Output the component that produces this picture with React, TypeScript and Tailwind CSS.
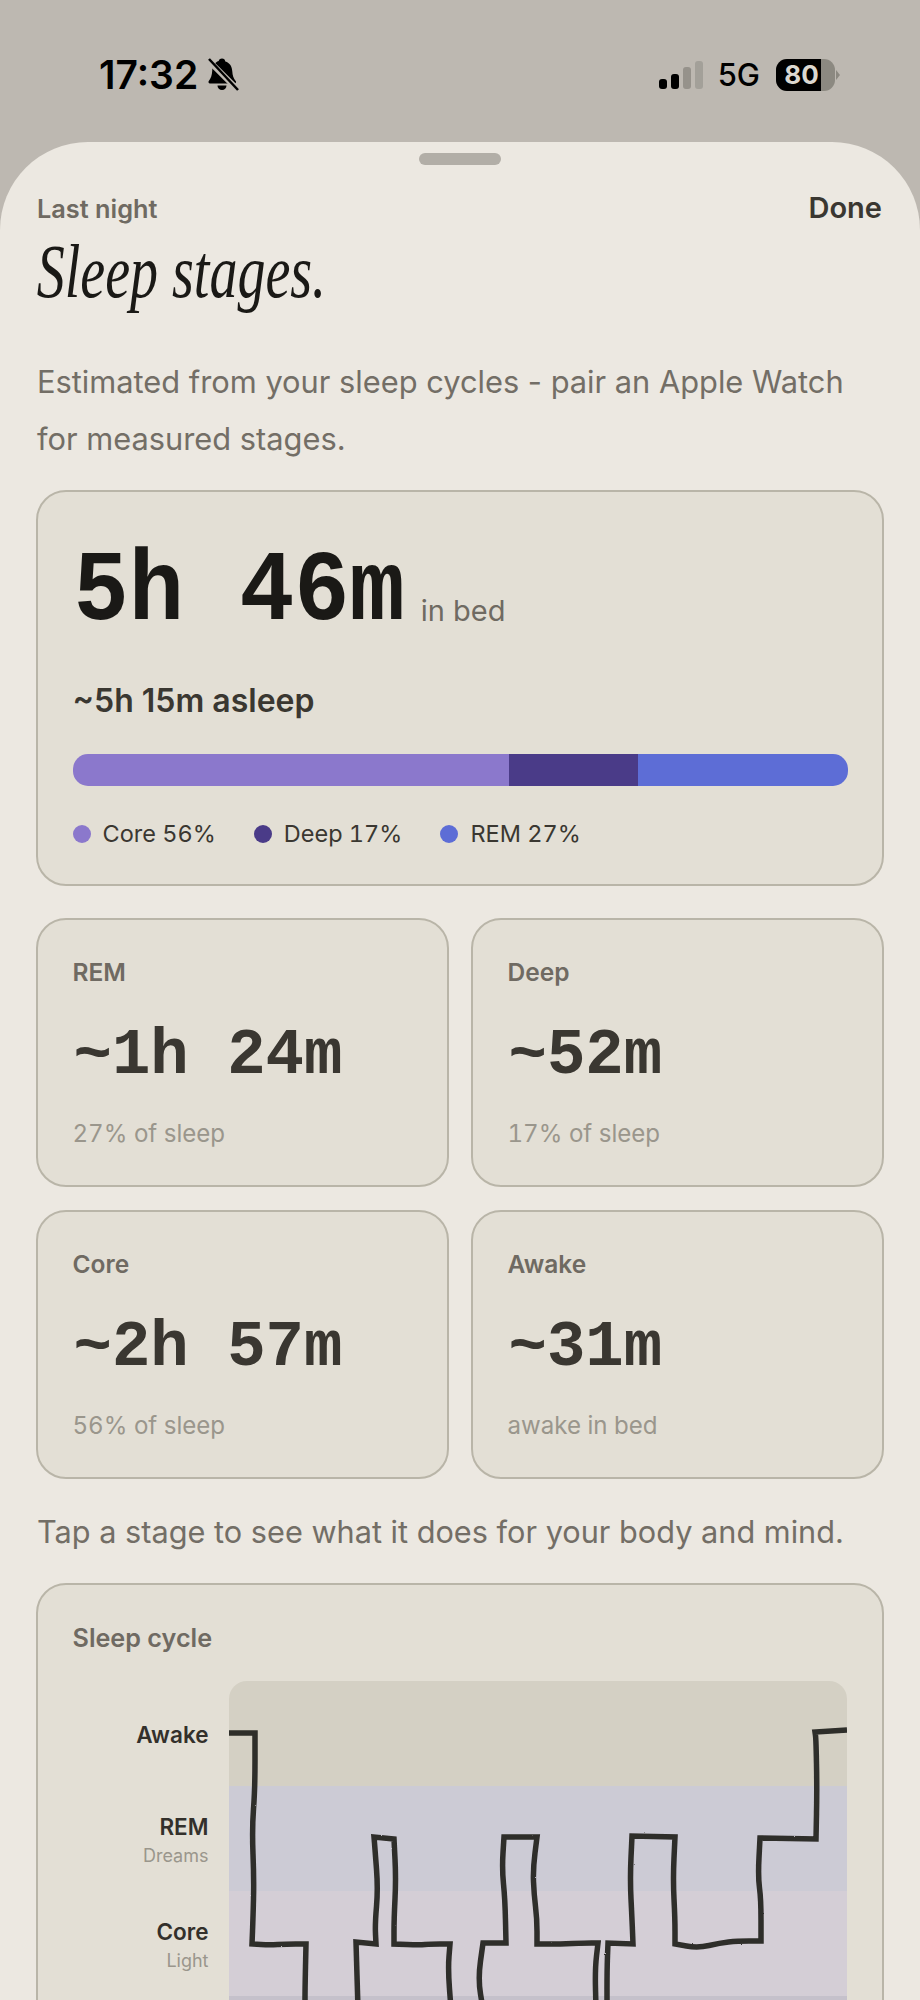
const sans = "font-['Inter',sans-serif]";
const mono = "font-['Liberation_Mono',monospace]";

function BellSlash() {
  return (
    <svg width="32" height="36" viewBox="0 0 32 36" className="ml-[9px]">
      <path d="M15 1.500c2 0 3 1.200 3.300 3 4.600 1.300 6.700 5 7 10 .2 4 1.200 7 3.400 9.600.8 1 .2 2.400-1.200 2.400H3c-1.400 0-2-1.400-1.200-2.400C4 21.100 5 18 5.200 14c.2-5 2.500-8.700 6.500-10 .3-1.400 1.300-2.500 3.300-2.500Z" fill="#000" />
      <path d="M10.500 28.500h9a4.500 4.500 0 0 1-9 0Z" fill="#000" />
      <path d="M1 3 31 33" stroke="#bdb8b1" strokeWidth="6" />
      <path d="M2 2 31 33" stroke="#000" strokeWidth="2.500" />
    </svg>
  );
}

function StatusBar() {
  return (
    <div className={`flex h-[142px] items-start justify-between pl-[99px] pr-[80px] pt-[53px] text-black ${sans}`}>
      <div className="flex h-[44px] items-center">
        <span className="text-[39px] font-semibold leading-[44px]">17:32</span>
        <BellSlash />
      </div>
      <div className="flex h-[44px] items-center">
        <div className="flex h-[28px] items-end gap-[4px]">
          <div className="h-[10px] w-[8px] rounded-[3px] bg-black" />
          <div className="h-[15px] w-[8px] rounded-[3px] bg-black" />
          <div className="h-[22px] w-[8px] rounded-[3px] bg-[#96928b]" />
          <div className="h-[28px] w-[8px] rounded-[3px] bg-[#a3a099]" />
        </div>
        <span className="ml-[15px] text-[31px] font-medium leading-[44px]">5G</span>
        <div className="relative ml-[16px] flex h-[32px] w-[59px] overflow-hidden rounded-[11px] bg-[#8c8981]">
          <div className="flex w-[45px] items-center justify-center bg-black text-[26px] font-bold leading-none text-[#dcd8d0]">
            <span className="pl-[6px]">80</span>
          </div>
        </div>
        <svg width="4" height="10" viewBox="0 0 4 10" className="ml-[1px]"><path d="M0 0 4 5 0 10Z" fill="#8c8981" /></svg>
      </div>
    </div>
  );
}

function Stat({ label, value, sub }: { label: string; value: string; sub: string }) {
  return (
    <div className="h-[269px] rounded-[30px] border-[2.500px] border-[#b9b5a8] bg-[#e3dfd5] px-[34.500px] pt-[37px]">
      <div className="text-[24.500px] font-semibold leading-[30px] text-[#6f6a62]">{label}</div>
      <div className={`mt-[33px] pl-[1px] text-[64px] font-bold leading-[72px] whitespace-pre text-[#3a3731] ${mono}`}>{value}</div>
      <div className="mt-[27px] text-[24.100px] leading-[30px] tabular-nums text-[#9a968c]">{sub}</div>
    </div>
  );
}

function Legend({ color, text }: { color: string; text: string }) {
  return (
    <div className="flex items-center gap-[12px]">
      <span className="size-[18px] rounded-full" style={{ backgroundColor: color }} />
      <span className="text-[23.500px] leading-[30px] tabular-nums text-[#3a3731]">{text}</span>
    </div>
  );
}

function BandLabel({ name, sub, h }: { name: string; sub?: string; h: string }) {
  return (
    <div className={`flex flex-col items-end ${h}`}>
      <span className="text-[22.500px] font-semibold leading-[30px] text-[#33302b]">{name}</span>
      {sub && <span className="text-[18px] leading-[28px] text-[#9a968c]">{sub}</span>}
    </div>
  );
}

const OX = 229;
const OY = 1682;
function pts(list: number[][]) {
  const p = list.map((q) => [q[0] - OX, q[1] - OY]);
  let d = `M${p[0][0]} ${p[0][1]}`;
  for (let i = 1; i < p.length - 1; i++) {
    const a = p[i - 1];
    const b = p[i];
    const c = p[i + 1];
    const v1 = Math.atan2(b[1] - a[1], b[0] - a[0]);
    const v2 = Math.atan2(c[1] - b[1], c[0] - b[0]);
    let diff = Math.abs(v1 - v2);
    if (diff > Math.PI) diff = 2 * Math.PI - diff;
    if (diff > Math.PI / 4) {
      d += ` L${b[0]} ${b[1]}`;
    } else {
      d += ` L${(a[0] + b[0]) / 2} ${(a[1] + b[1]) / 2} Q${b[0]} ${b[1]} ${(b[0] + c[0]) / 2} ${(b[1] + c[1]) / 2}`;
    }
  }
  const e = p[p.length - 1];
  return `${d} L${e[0]} ${e[1]}`;
}
const lines = [
  [[229,1734],[255,1734],[255,1790],[252,1830],[254,1880],[253,1920],[252,1945],[270,1946],[285,1945],[306,1945],[305,1990],[305,2010]],
  [[358,2010],[356,1943],[376,1945],[375,1925],[378,1890],[375,1850],[374,1838],[394,1840],[396,1880],[394,1920],[394,1945],[420,1946],[430,1945],[450,1945],[448,1970],[451,2010]],
  [[483,2010],[478,1980],[483,1944],[506,1944],[505,1900],[502,1870],[504,1838],[537,1838],[533,1870],[534,1895],[537,1920],[537,1945],[560,1945],[585,1944],[598,1944],[595,1970],[596,2010]],
  [[607,2010],[607,1970],[608,1944],[633,1945],[632,1920],[630,1880],[632,1837],[675,1838],[673,1880],[675,1920],[675,1945],[698,1949],[720,1944],[737,1942],[761,1942],[761,1900],[758,1878],[760,1839],[816,1840],[817,1790],[816,1740],[815,1733],[847,1731]],
];

function Chart() {
  return (
    <div className="relative flex h-[420px] w-[618px] flex-col overflow-hidden rounded-t-[18px]">
      <div className="h-[105px] bg-[#d4d0c4]" />
      <div className="h-[105px] bg-[#cccbd5]" />
      <div className="h-[105px] bg-[#d4ced6]" />
      <div className="h-[105px] bg-[#c5c1cb]" />
      <svg className="absolute inset-0" width="618" height="420" viewBox="0 0 618 420" fill="none">
        <filter id="rough" x="-5%" y="-5%" width="110%" height="110%">
          <feTurbulence type="fractalNoise" baseFrequency="0.9" numOctaves="2" seed="3" />
          <feDisplacementMap in="SourceGraphic" scale="1.5" />
        </filter>
        <g filter="url(#rough)">
          {lines.map((l, i) => (
            <path key={i} d={pts(l)} stroke="#2e2d2a" strokeWidth="5.500" strokeLinejoin="miter" />
          ))}
        </g>
      </svg>
    </div>
  );
}

export default function App() {
  return (
    <div className={`h-[2000px] w-[920px] overflow-hidden bg-[#bdb8b1] ${sans}`}>
      <StatusBar />
      <div className="h-[1858px] rounded-t-[88px] bg-[#ece8e1] px-[36px] pt-[11px]">
        <div className="mx-auto h-[12px] w-[82px] rounded-full bg-[#b2aea7]" />
        <div className="mt-[27px] flex items-center justify-between pl-[1px] pr-[2px]">
          <span className="pt-[1px] text-[25.300px] font-semibold leading-[32px] text-[#6f6a62]">Last night</span>
          <span className="pb-[1px] text-[29px] font-semibold leading-[32px] text-[#3a3731]">Done</span>
        </div>
        <h1 className="mt-[8px] origin-left scale-x-[0.737] pl-[1px] font-['Liberation_Serif',serif] text-[76px] font-normal italic leading-[76px] text-[#1a1916]">Sleep stages.</h1>
        <p className="mt-[43.500px] pl-[1px] text-[30.800px] leading-[57px] text-[#736e66]">Estimated from your sleep cycles - pair an Apple Watch<br />for measured stages.</p>
        <div className="mt-[23px] h-[396px] rounded-[30px] border-[2.500px] border-[#b9b5a8] bg-[#e3dfd5] px-[34.500px] pt-[55px]">
          <div className="flex items-baseline">
            <span className={`inline-block origin-bottom scale-y-[1.08] pl-[1px] text-[92px] font-bold leading-[100px] text-[#1a1916] ${mono}`}>5h 46m</span>
            <span className="ml-[16px] text-[29px] text-[#6f6a62]">in bed</span>
          </div>
          <div className="mt-[34px] text-[32px] font-semibold leading-[40px] text-[#3a3731]">~5h 15m asleep</div>
          <div className="mt-[33px] flex h-[32px] overflow-hidden rounded-[15px]">
            <div className="w-[436px] bg-[#8b78cc]" />
            <div className="w-[129px] bg-[#4a3b88]" />
            <div className="flex-1 bg-[#5d6dd6]" />
          </div>
          <div className="mt-[33px] flex gap-[38px]">
            <Legend color="#8b78cc" text="Core 56%" />
            <Legend color="#4a3b88" text="Deep 17%" />
            <Legend color="#5d6dd6" text="REM 27%" />
          </div>
        </div>
        <div className="mt-[32px] grid grid-cols-2 gap-x-[22px] gap-y-[23px]">
          <Stat label="REM" value="~1h 24m" sub="27% of sleep" />
          <Stat label="Deep" value="~52m" sub="17% of sleep" />
          <Stat label="Core" value="~2h 57m" sub="56% of sleep" />
          <Stat label="Awake" value="~31m" sub="awake in bed" />
        </div>
        <p className="mt-[24px] pl-[1px] text-[30.700px] leading-[57px] text-[#736e66]">Tap a stage to see what it does for your body and mind.</p>
        <div className="mt-[23px] h-[500px] rounded-[30px] border-[2.500px] border-[#b9b5a8] bg-[#e3dfd5] px-[34.500px] pt-[37px]">
          <div className="text-[25.200px] font-semibold leading-[32px] text-[#6f6a62]">Sleep cycle</div>
          <div className="mt-[27px] flex">
            <div className="w-[156px] shrink-0 pr-[20px] pt-[39px]">
              <BandLabel name="Awake" h="h-[92px]" />
              <BandLabel name="REM" sub="Dreams" h="h-[105px]" />
              <BandLabel name="Core" sub="Light" h="h-[105px]" />
            </div>
            <Chart />
          </div>
        </div>
      </div>
    </div>
  );
}
